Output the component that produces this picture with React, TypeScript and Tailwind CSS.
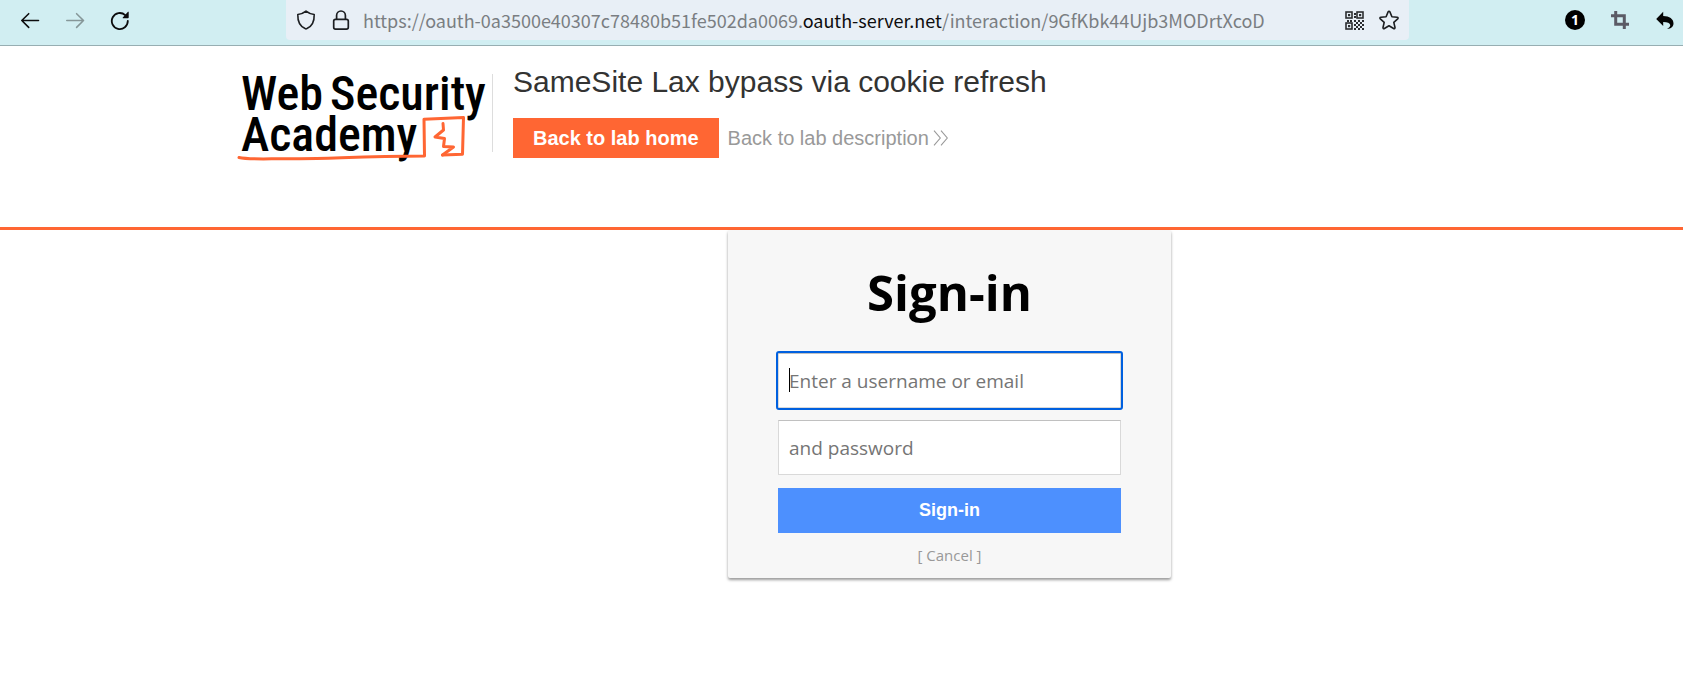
import type { ReactNode } from "react";

function ToolButton({ label, children }: { label: string; children: ReactNode }) {
  return (
    <button type="button" aria-label={label} className="flex size-5 shrink-0 items-center justify-center">
      {children}
    </button>
  );
}

const QR_CELLS = [
  [9, 2], [9, 5], [2, 9], [5, 9], [9, 9], [13, 9], [17, 9], [11, 11], [15, 11], [9, 13], [13, 13], [17, 13],
  [11, 15], [15, 15], [9, 17], [13, 17], [17, 17],
];

function QrIcon() {
  return (
    <svg viewBox="0 0 19 19" className="size-[19px]" fill="none" stroke="#2b2d30">
      <g strokeWidth="1.6">
        <rect x="1" y="1" width="6" height="6" />
        <rect x="12" y="1" width="6" height="6" />
        <rect x="1" y="12" width="6" height="6" />
      </g>
      <g fill="#2b2d30" stroke="none">
        <rect x="3" y="3" width="2.2" height="2.2" />
        <rect x="14" y="3" width="2.2" height="2.2" />
        <rect x="3" y="14" width="2.2" height="2.2" />
        {QR_CELLS.map(([x, y]) => (
          <rect key={`${x}-${y}`} x={x} y={y} width="2" height="2" />
        ))}
      </g>
    </svg>
  );
}

function BrowserBar() {
  return (
    <div className="flex h-[46px] items-start border-b border-[#97aeb2] bg-[#d1eef2]">
      <div className="flex h-10 shrink-0 items-center gap-[25px] pl-5">
        <ToolButton label="Back">
          <svg viewBox="0 0 20 20" className="size-5" fill="none" stroke="#0c0c0d" strokeWidth="1.6" strokeLinecap="round" strokeLinejoin="round">
            <path d="M18.5 10.5H1.8M8.7 3.7L1.8 10.5l6.9 6.9" />
          </svg>
        </ToolButton>
        <ToolButton label="Forward">
          <svg viewBox="0 0 20 20" className="size-5" fill="none" stroke="#869799" strokeWidth="1.6" strokeLinecap="round" strokeLinejoin="round">
            <path d="M1.8 10.5h16.7M11.6 3.7l6.9 6.8-6.9 6.9" />
          </svg>
        </ToolButton>
        <ToolButton label="Reload">
          <svg viewBox="0 0 20 20" className="size-5" fill="none">
            <path d="M17.8 10.8a8 8 0 1 1-2.6-5.7" stroke="#0c0c0d" strokeWidth="1.8" strokeLinecap="round" />
            <path d="M18.7 2v5.4a.8.8 0 0 1-.8.8h-4.700c-.5 0-.7-.5-.4-.8l5.200-5.600c.3-.3.7-.1.7.2z" fill="#0c0c0d" />
          </svg>
        </ToolButton>
      </div>

      <div className="ml-[156px] flex h-10 min-w-0 max-w-[1123px] flex-1 items-center rounded-b-[4px] bg-[#e8eff6] px-[10px]">
        <ToolButton label="Tracking protection">
          <svg viewBox="0 0 20 20" className="size-5" fill="none" stroke="#1c1e21" strokeWidth="1.6" strokeLinejoin="round">
            <path d="M10 1.2c2.400 2 5 3 8.200 3.300.2 6.500-2.400 11.900-7.300 14.100a2 2 0 0 1-1.800 0C4.200 16.400 1.600 11 1.800 4.500 5 4.200 7.600 3.200 10 1.200z" />
          </svg>
        </ToolButton>
        <span className="ml-[15px] flex">
          <ToolButton label="Site information">
            <svg viewBox="0 0 20 20" className="size-5" fill="none" stroke="#1c1e21" strokeWidth="1.7">
              <rect x="2.700" y="9.300" width="14.600" height="9.800" rx="1.800" />
              <path d="M5.600 9.300V5.400a4.400 4.400 0 0 1 8.800 0v3.900" />
            </svg>
          </ToolButton>
        </span>
        <p className="ml-3 min-w-0 flex-1 truncate font-['Noto_Sans_CJK_SC',sans-serif] text-[18px] leading-7 text-[#7a7e82]">
          https://oauth-0a3500e40307c78480b51fe502da0069.<span className="text-[#0c0c0d]">oauth-server.net</span>
          /interaction/9GfKbk44Ujb3MODrtXcoD
        </p>
        <div className="flex items-center gap-[15px]">
          <ToolButton label="QR code">
            <QrIcon />
          </ToolButton>
          <ToolButton label="Bookmark this page">
            <svg viewBox="0 0 20 20" className="size-5 overflow-visible" fill="none" stroke="#1c1e21" strokeWidth="1.600" strokeLinejoin="round">
              <path d="M10 1.200c.4 0 .7.3.9.7l2 4.800 5.200.5c1 .1 1.300 1 .6 1.700l-3.900 3.500 1.200 5.100c.2.900-.7 1.500-1.400 1L10 15.800l-4.600 2.700c-.7.500-1.600-.1-1.400-1l1.200-5.100-3.900-3.500c-.7-.7-.4-1.600.6-1.700l5.200-.5 2-4.800c.2-.4.5-.7.9-.7z" />
            </svg>
          </ToolButton>
        </div>
      </div>

      <div className="ml-auto flex h-10 shrink-0 items-center gap-[25px] pl-4 pr-2">
        <ToolButton label="One notification">
          <span className="flex size-5 items-center justify-center rounded-full bg-black font-['Open_Sans',sans-serif] text-[14px] font-bold leading-5 text-white">
            1
          </span>
        </ToolButton>
        <ToolButton label="Crop">
          <svg viewBox="0 0 20 20" className="size-5" fill="none" stroke="#5b5b66" strokeWidth="3">
            <path d="M5.700 1v13.300H19M1 5.700h13.300V19" />
          </svg>
        </ToolButton>
        <ToolButton label="Undo">
          <svg viewBox="0 0 20 20" className="size-5" fill="#050505">
            <path d="M8.200 1.800v4.300c6.400.1 10.300 3 10.300 7.300 0 3-2.300 5.200-6.500 5.400 2.400-1 3.400-2.200 3.200-3.700-.3-2-2.600-3-7-3.100v4.100L1.200 8.900z" />
          </svg>
        </ToolButton>
      </div>
    </div>
  );
}

function AcademyLogo() {
  return (
    <svg viewBox="0 0 254 120" className="h-[120px] w-[254px] shrink-0" role="img" aria-label="Web Security Academy">
      <g className="font-['Roboto_Condensed','Roboto',sans-serif] text-[48px] font-medium" fill="#000">
        <text x="4" y="60">Web</text>
        <text x="93" y="60">Security</text>
        <text x="4" y="101">Academy</text>
      </g>
      <g fill="none" stroke="#ff6633" strokeLinecap="round" strokeLinejoin="round">
        <path d="M2 107.500C12 110 30 108.500 60 108.700S120 106.500 187.500 106L187 69.200l39.500-1.600-1 36.700-20 .7" strokeWidth="3" />
        <path d="M206 73.500l.5 6.500-8.500 7 9.500 1.500-1 8 10 .5-11 8" strokeWidth="3" />
      </g>
    </svg>
  );
}

function LabHeader() {
  return (
    <header className="flex h-[184px] items-start border-b-[3px] border-[#ff6633] pl-[237px] font-['Liberation_Sans',Arial,sans-serif]">
      <a href="#academy" className="mt-1 flex">
        <AcademyLogo />
      </a>
      <div className="ml-px mt-7 h-[78px] w-px shrink-0 bg-[#dddddd]" />
      <div className="ml-5 mt-5">
        <h2 className="text-[30px] leading-8 text-[#333332]">SameSite Lax bypass via cookie refresh</h2>
        <div className="mt-5 flex items-center gap-[9px] text-[20px] leading-10">
          <a href="#lab" className="bg-[#ff6633] px-5 font-bold text-white">
            Back to lab home
          </a>
          <a href="#description" className="flex items-center gap-1 text-[#999999]">
            Back to lab description
            <svg viewBox="0 0 15 16" className="h-4 w-[15px]" fill="none" stroke="#999999" strokeWidth="1.100">
              <path d="M1 .7L7.300 8 1 15.300M8 .7L14.300 8 8 15.300" />
            </svg>
          </a>
        </div>
      </div>
    </header>
  );
}

const FIELD =
  "h-[55px] w-full border border-[#d9d9d9] border-t-[#c0c0c0] bg-white px-[10px] text-[19px] text-black placeholder:text-[#757575] placeholder:opacity-100";

function SignInCard() {
  return (
    <main className="flex justify-center pl-[216px] font-['Open_Sans','Noto_Sans',sans-serif]">
      <div className="w-[443px] max-w-full rounded-[2px] bg-[#f7f7f7] px-[50px] pb-[13px] shadow-[0_2px_3px_rgba(0,0,0,0.4)]">
        <h1 className="pb-[26px] pt-[27px] text-center text-[49px] font-bold leading-[70px] text-black">Sign-in</h1>
        <form className="flex flex-col" onSubmit={(e) => e.preventDefault()}>
          <div className="relative flex">
            <input
              type="text"
              aria-label="Username or email"
              placeholder="Enter a username or email"
              autoFocus
              className={`${FIELD} peer rounded-[1px] caret-transparent outline-2 outline-[#0060df]`}
            />
            <span className="pointer-events-none absolute left-[11px] top-[15px] hidden h-6 w-px bg-black peer-focus:peer-placeholder-shown:block" />
          </div>
          <input
            type="password"
            aria-label="Password"
            placeholder="and password"
            className={`${FIELD} mt-3 outline-[#0060df]`}
          />
          <button
            type="submit"
            className="mt-[13px] h-[45px] bg-[#4d90fe] font-['Liberation_Sans',Arial,sans-serif] text-[18px] font-bold text-white"
          >
            Sign-in
          </button>
        </form>
        <p className="mt-3 text-center text-[15px] leading-5 text-[#999999]">
          <a href="#cancel">[ Cancel ]</a>
        </p>
      </div>
    </main>
  );
}

export default function App() {
  return (
    <div className="min-h-screen bg-white">
      <BrowserBar />
      <LabHeader />
      <SignInCard />
    </div>
  );
}
